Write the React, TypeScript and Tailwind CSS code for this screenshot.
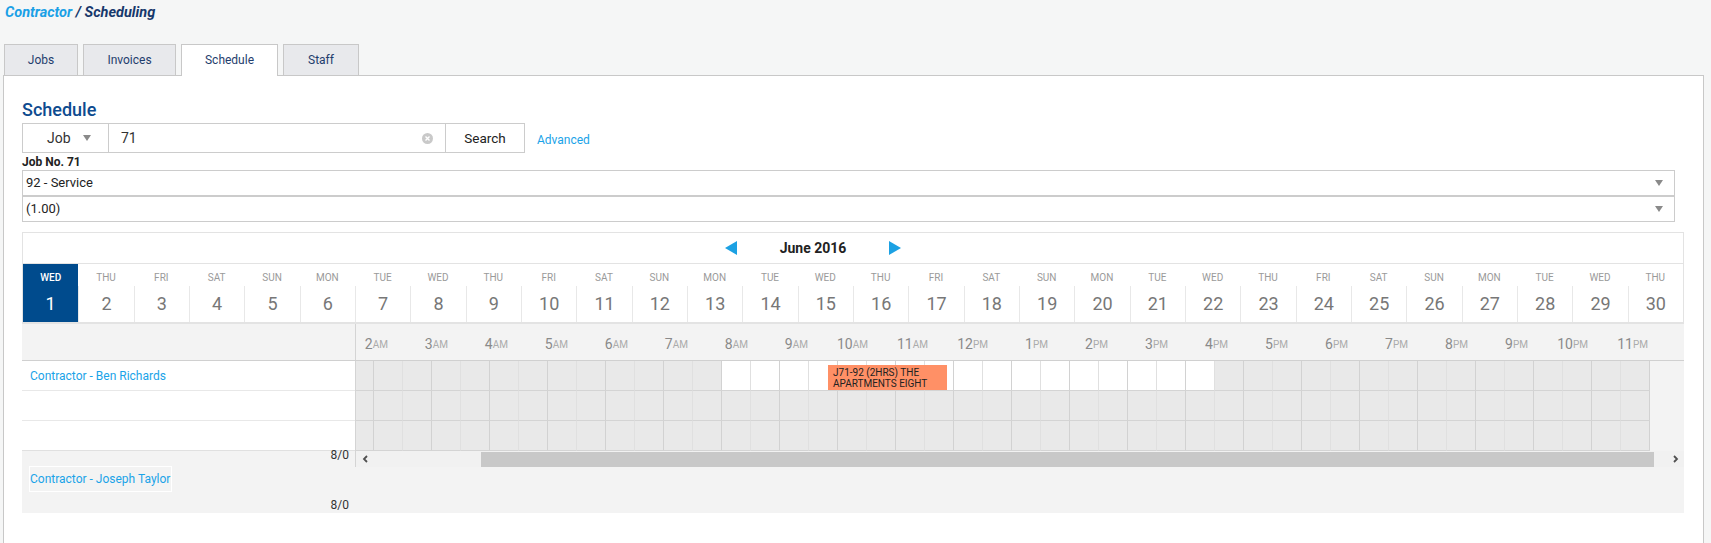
import React from "react";

const DAY_NAMES = ["WED", "THU", "FRI", "SAT", "SUN", "MON", "TUE"];
const HOURS = [
  ["2", "AM"], ["3", "AM"], ["4", "AM"], ["5", "AM"], ["6", "AM"], ["7", "AM"],
  ["8", "AM"], ["9", "AM"], ["10", "AM"], ["11", "AM"], ["12", "PM"], ["1", "PM"],
  ["2", "PM"], ["3", "PM"], ["4", "PM"], ["5", "PM"], ["6", "PM"], ["7", "PM"],
  ["8", "PM"], ["9", "PM"], ["10", "PM"], ["11", "PM"],
];

const tabs = [
  { label: "Jobs", w: "w-[74px]" },
  { label: "Invoices", w: "w-[93px]" },
  { label: "Schedule", w: "w-[97px]", active: true },
  { label: "Staff", w: "w-[76px]" },
];

// working hours on the first row: 8:00 to 16:30 (half-hour slots 12..28)
const GridRow = ({ working, children }: { working?: boolean; children?: React.ReactNode }) => (
  <div className="relative flex h-[30px] bg-[#f3f3f3]">
    <div className="w-[17px] shrink-0 border-b border-[#d4d4d4] bg-[#e9e9e9]" />
    {Array.from({ length: 44 }).map((_, i) => {
      const white = working && i >= 12 && i <= 28;
      return (
        <div
          key={i}
          className={
            "w-[29px] shrink-0 border-b border-l border-b-[#d4d4d4] " +
            (i % 2 === 0 ? "border-l-[#d2d2d2] " : "border-l-[#e0e0e0] ") +
            (white ? "bg-white" : "bg-[#e9e9e9]")
          }
        />
      );
    })}
    <div className="w-px shrink-0 border-b border-[#d4d4d4] bg-[#d2d2d2]" />
    {children}
  </div>
);

const Triangle = ({ dir }: { dir: "left" | "right" }) => (
  <svg width="12" height="14" viewBox="0 0 12 14">
    <polygon points={dir === "left" ? "12,0 12,14 0,7" : "0,0 0,14 12,7"} fill="#1ca1e3" />
  </svg>
);

const Caret = () => (
  <svg width="8" height="6" viewBox="0 0 8 6">
    <polygon points="0,0 8,0 4,6" fill="#8a8a8a" />
  </svg>
);

const Chevron = ({ dir }: { dir: "left" | "right" }) => (
  <svg width="6" height="8" viewBox="0 0 6 8">
    <polyline
      points={dir === "left" ? "5,1 2,4 5,7" : "1,1 4,4 1,7"}
      fill="none"
      stroke="#505050"
      strokeWidth="1.8"
    />
  </svg>
);

export default function App() {
  return (
    <div className="min-h-[543px] w-[1711px] bg-[#f5f6f6] font-['Roboto',sans-serif] text-[#333]">
      {/* breadcrumb */}
      <div className="h-[44px] pl-[5px] pt-[4px] text-[14.5px] font-bold italic leading-[18px]">
        <span className="text-[#1aa0e6]">Contractor</span>
        <span className="text-[#17386b]"> / Scheduling</span>
      </div>

      {/* tabs */}
      <div className="flex items-end gap-[5px] pl-[4px]">
        {tabs.map((t) => (
          <div
            key={t.label}
            className={
              t.w +
              " relative flex items-center justify-center border border-b-0 border-[#c8c8c8] text-[12px] text-[#1f3d6d] " +
              (t.active ? "z-10 -mb-px h-[32px] bg-white pb-px" : "h-[31px] bg-[#e8e9ec]")
            }
          >
            {t.label}
          </div>
        ))}
      </div>

      {/* panel */}
      <div className="ml-[3px] min-h-[468px] w-[1701px] border border-b-0 border-[#c8c8c8] bg-white pl-[18px] pr-[19px] pt-[22px]">
        <h2 className="mb-[1px] text-[18px] font-medium leading-[24px] text-[#0e4b8f]">Schedule</h2>

        {/* search */}
        <div className="flex h-[30px] items-stretch">
          <div className="flex w-[87px] items-center border border-[#cccccc] pl-[24px] text-[14px] text-[#333]">
            <span className="w-[36px]">Job</span>
            <Caret />
          </div>
          <div className="flex w-[336px] items-center justify-between border-y border-[#cccccc] pl-[12px] pr-[12px] text-[14px]">
            <span>71</span>
            <svg width="11" height="11" viewBox="0 0 11 11">
              <circle cx="5.5" cy="5.5" r="5.5" fill="#c9c9c9" />
              <path d="M3.5 3.5 L7.5 7.5 M7.5 3.5 L3.5 7.5" stroke="#fff" strokeWidth="1.4" />
            </svg>
          </div>
          <div className="flex w-[80px] items-center justify-center border border-[#cccccc] text-[13.5px] text-[#222]">
            Search
          </div>
          <div className="ml-[12px] flex items-center pt-[4px] text-[12px] text-[#1aa3e8]">Advanced</div>
        </div>

        <div className="mt-[2px] text-[12px] font-bold leading-[14px] text-[#222]">Job No. 71</div>

        <div className="mr-[9px] mt-[1px]">
          <div className="flex h-[26px] items-center justify-between border border-[#cccccc] pl-[3px] pr-[11px] text-[13px] text-[#222]">
            <span>92 - Service</span>
            <Caret />
          </div>
          <div className="flex h-[26px] items-center justify-between border border-[#cccccc] pl-[3px] pr-[11px] text-[13px] text-[#222]">
            <span>(1.00)</span>
            <Caret />
          </div>
        </div>

        {/* calendar */}
        <div className="mt-[10px] border-x border-t border-[#e3e3e3]">
          <div className="flex h-[31px] items-center justify-center gap-[43px] border-b border-[#e3e3e3] pr-[80px]">
            <Triangle dir="left" />
            <span className="text-[14px] font-bold text-[#222]">June 2016</span>
            <Triangle dir="right" />
          </div>
          <div className="grid h-[60px] grid-cols-[repeat(30,minmax(0,1fr))] border-b-2 border-[#e3e3e3]">
            {Array.from({ length: 30 }).map((_, i) => {
              const active = i === 0;
              return (
                <div key={i} className={"flex flex-col " + (active ? "bg-[#004b8d]" : "")}>
                  <div
                    className={
                      "pt-[8px] text-center text-[10px] leading-[12px] " +
                      (active ? "font-medium text-white" : "text-[#9a9a9a]")
                    }
                  >
                    {DAY_NAMES[i % 7]}
                  </div>
                  <div
                    className={
                      "mt-[2px] h-[36px] text-center text-[18px] leading-[36px] " +
                      (active ? "text-white" : "border-l border-[#e8e8e8] text-[#777]")
                    }
                  >
                    {i + 1}
                  </div>
                </div>
              );
            })}
          </div>
        </div>

        {/* resource header */}
        <div className="flex h-[37px] border-b border-[#d0d0d0] bg-[#f3f3f3]">
          <div className="w-[333px] shrink-0" />
          <div className="flex flex-1 overflow-hidden border-l border-[#d4d4d4]">
            {HOURS.map(([n, p], i) => (
              <div key={i} className="flex w-[60px] shrink-0 items-center justify-end pr-[28px] pt-[5px]">
                <span className="text-[14px] text-[#8a8a8a]">{n}</span>
                <span className="text-[10px] text-[#ababab]">{p}</span>
              </div>
            ))}
          </div>
        </div>

        {/* rows */}
        <div className="flex">
          <div className="w-[333px] shrink-0 bg-white">
            <div className="flex h-[30px] items-center border-b border-[#e8e8e8] pl-[8px] text-[12px] text-[#1aa3e8]">
              Contractor - Ben Richards
            </div>
            <div className="h-[30px] border-b border-[#e8e8e8]" />
            <div className="h-[30px] border-b border-[#e0e0e0]" />
          </div>
          <div className="flex-1 overflow-hidden border-l border-[#d4d4d4]">
            <GridRow working>
              <div className="absolute left-[472px] top-[4px] h-[25px] w-[119px] bg-[#ff9066] pl-[5px] pt-[2px] text-[10px] leading-[11px] text-[#222]">
                J71-92 (2HRS) THE
                <br />
                APARTMENTS EIGHT
              </div>
            </GridRow>
            <GridRow />
            <GridRow />
          </div>
        </div>

        {/* footer */}
        <div className="flex h-[62px] bg-[#f3f3f3]">
          <div className="flex w-[333px] shrink-0 flex-col">
            <div className="-mt-[2px] pr-[6px] text-right text-[12px] leading-[12px] text-[#333]">8/0</div>
            <div className="ml-[7px] mt-[5px] flex h-[26px] w-[143px] items-center border border-white text-[12px] text-[#1aa3e8]">
              Contractor - Joseph Taylor
            </div>
            <div className="mt-[7px] pr-[6px] text-right text-[12px] leading-[12px] text-[#333]">8/0</div>
          </div>
          <div className="flex-1">
            <div className="flex h-[16px] border-l border-[#d4d4d4] bg-[#f1f1f1]">
              <div className="flex w-[17px] shrink-0 items-center justify-center">
                <Chevron dir="left" />
              </div>
              <div className="flex-1 pl-[108px] pr-[13px] pt-px">
                <div className="h-[15px] bg-[#c8c8c8]" />
              </div>
              <div className="flex w-[17px] shrink-0 items-center justify-center">
                <Chevron dir="right" />
              </div>
            </div>
          </div>
        </div>
      </div>
    </div>
  );
}
